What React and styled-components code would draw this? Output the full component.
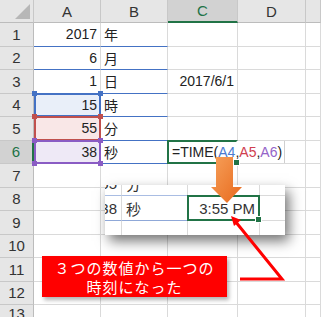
import React from 'react'
import styled, { createGlobalStyle } from 'styled-components';

const GlobalStyle = createGlobalStyle`
  html, body { margin: 0; padding: 0; background: #ffffff; }
  body { font-family: "Liberation Sans", "Noto Sans CJK JP", sans-serif; }
`

const Sheet = styled.div`
  position: relative;
  width: 321px;
  height: 317px;
  overflow: hidden;
  background: #ffffff;
`

const Grid = styled.div`
  display: grid;
  grid-template-columns: 34px 67px 67px 70px 68px 1fr;
  grid-template-rows: 23px repeat(12, 23.5px) 1fr;
  height: 100%;
`

const Corner = styled.div`
  position: relative;
  background: #e6e6e6;
  border-right: 1px solid #c8c8c8;
  border-bottom: 1px solid #bcbcbc;
  &::after{
    content: "";
    position: absolute;
    right: 3px;
    bottom: 3px;
    border-style: solid;
    border-width: 0 0 15px 15px;
    border-color: transparent transparent #b7b7b7 transparent;
  }
`

const ColHead = styled.div`
  display: flex;
  align-items: center;
  justify-content: center;
  font-size: 15px;
  color: ${({ $active }) => $active ? '#217346' : '#333333'};
  background: ${({ $active }) => $active ? '#d2d2d2' : '#e6e6e6'};
  border-right: 1px solid #c8c8c8;
  border-bottom: ${({ $active }) => $active ? '2px solid #217346' : '1px solid #bcbcbc'};
  box-sizing: border-box;
`

const RowHead = styled.div`
  display: flex;
  align-items: center;
  justify-content: center;
  font-size: 15px;
  color: ${({ $active }) => $active ? '#217346' : '#333333'};
  background: ${({ $active }) => $active ? '#d2d2d2' : '#e6e6e6'};
  border-right: ${({ $active }) => $active ? '2px solid #217346' : '1px solid #bcbcbc'};
  border-bottom: 1px solid #c8c8c8;
  box-sizing: border-box;
`

const Cell = styled.div`
  position: relative;
  display: flex;
  align-items: center;
  justify-content: ${({ $align }) => $align === 'right' ? 'flex-end' : 'flex-start'};
  padding: 0 3px;
  font-size: 14px;
  color: #222222;
  white-space: nowrap;
  background: ${({ $fill }) => $fill || '#ffffff'};
  border-right: 1px solid #dadada;
  border-bottom: 1px solid ${({ $under }) => $under || '#dadada'};
  box-sizing: border-box;
`

const RangeFrame = styled.div`
  position: absolute;
  left: 0;
  top: -1px;
  right: -1px;
  bottom: -1px;
  border: 2px solid ${({ $color }) => $color};
  z-index: 2;
  pointer-events: none;
`

const Handle = styled.span`
  position: absolute;
  width: 5px;
  height: 5px;
  background: ${({ $color }) => $color};
  ${({ $v }) => $v === 'top' ? 'top: -4px;' : 'bottom: -4px;'}
  ${({ $h }) => $h === 'left' ? 'left: -4px;' : 'right: -4px;'}
`

const Editor = styled.div`
  position: absolute;
  left: 0;
  top: 0;
  width: 117px;
  height: 100%;
  display: flex;
  align-items: center;
  padding-left: 4px;
  box-sizing: border-box;
  background: #ffffff;
  border-right: 1px solid #cfcfcf;
  font-size: 14px;
  color: #222222;
  z-index: 3;
`

const Ref = styled.span`
  color: ${({ $color }) => $color};
`

const ActiveFrame = styled.div`
  position: absolute;
  left: -1px;
  top: -1px;
  right: -1px;
  bottom: -1px;
  border: 2px solid #217346;
  border-right-color: ${({ $open }) => $open ? 'transparent' : '#217346'};
  z-index: 4;
  pointer-events: none;
`

const FillHandle = styled.span`
  position: absolute;
  right: -4px;
  bottom: -4px;
  width: 5px;
  height: 5px;
  background: #217346;
  border: 1px solid #ffffff;
`

/* zoomed-in callout */
const Callout = styled.div`
  position: absolute;
  left: 105px;
  top: 185px;
  width: 180px;
  height: 50px;
  overflow: hidden;
  background: #ffffff;
  box-shadow: 4px 6px 12px rgba(0, 0, 0, 0.55);
  z-index: 6;
`

const CalloutGrid = styled.div`
  display: grid;
  grid-template-columns: 67px 66px 72px 68px;
  grid-template-rows: repeat(3, 25px);
  margin-left: -50px;
  margin-top: -14px;
`

const ZoomCell = styled(Cell)`
  font-size: 15px;
  color: #333333;
  padding: 0 4px;
`

const OrangeArrow = styled.svg`
  position: absolute;
  left: 208px;
  top: 155px;
  z-index: 7;
`

const RedPointer = styled.svg`
  position: absolute;
  left: 222px;
  top: 208px;
  z-index: 7;
`

const Note = styled.div`
  position: absolute;
  left: 42px;
  top: 256px;
  width: 185px;
  height: 41px;
  display: flex;
  flex-direction: column;
  align-items: center;
  justify-content: center;
  background: #ff0000;
  color: #ffffff;
  font-family: "Noto Sans CJK JP", sans-serif;
  font-size: 15px;
  line-height: 19px;
  letter-spacing: 1px;
  box-shadow: 2px 3px 4px rgba(0, 0, 0, 0.3);
  z-index: 7;
`

const BLUE = '#4472c4';
const RED = '#c0504d';
const PURPLE = '#8a5cc4';

const rows = [
  { a: '2017', b: '年', c: '', under: BLUE },
  { a: '6', b: '月', c: '', under: BLUE },
  { a: '1', b: '日', c: '2017/6/1', under: BLUE },
  { a: '15', b: '時', range: BLUE, fill: '#e9eff9', under: BLUE },
  { a: '55', b: '分', range: RED, fill: '#f9e7e7', under: BLUE },
  { a: '38', b: '秒', range: PURPLE, fill: '#eee9f6', under: BLUE, formula: true },
  {}, {}, {}, {}, {}, {}
];

const Range = ({ color }) => (
  <RangeFrame $color={color}>
    <Handle $color={color} $v="top" $h="left" />
    <Handle $color={color} $v="top" $h="right" />
    <Handle $color={color} $v="bottom" $h="left" />
    <Handle $color={color} $v="bottom" $h="right" />
  </RangeFrame>
)

const App = () => {
  return (
    <Sheet>
      <GlobalStyle />
      <Grid>
        <Corner />
        <ColHead>A</ColHead>
        <ColHead>B</ColHead>
        <ColHead $active>C</ColHead>
        <ColHead>D</ColHead>
        <ColHead />
        {rows.map((r, i) => (
          <React.Fragment key={i}>
            <RowHead $active={r.formula}>{i + 1}</RowHead>
            <Cell $align="right" $fill={r.fill} $under={r.under}>
              {r.a}
              {r.range && <Range color={r.range} />}
            </Cell>
            <Cell $under={r.under}>{r.b}</Cell>
            <Cell $align="right">
              {r.c}
              {r.formula && (
                <>
                  <Editor>
                    =TIME(<Ref $color="#4a7bd0">A4</Ref>,<Ref $color="#d0404f">A5</Ref>,<Ref $color="#9464c8">A6</Ref>)
                  </Editor>
                  <ActiveFrame $open><FillHandle /></ActiveFrame>
                </>
              )}
            </Cell>
            <Cell />
            <Cell />
          </React.Fragment>
        ))}
        <RowHead>13</RowHead>
        <Cell /><Cell /><Cell /><Cell /><Cell />
      </Grid>

      <Callout>
        <CalloutGrid>
          <ZoomCell $align="right" $under="#a9bde3">55</ZoomCell>
          <ZoomCell $under="#a9bde3">分</ZoomCell>
          <ZoomCell />
          <ZoomCell />
          <ZoomCell $align="right" $under="#8fa8d8">38</ZoomCell>
          <ZoomCell $under="#8fa8d8">秒</ZoomCell>
          <ZoomCell $align="right">
            3:55 PM
            <ActiveFrame><FillHandle /></ActiveFrame>
          </ZoomCell>
          <ZoomCell />
          <ZoomCell /><ZoomCell /><ZoomCell /><ZoomCell />
        </CalloutGrid>
      </Callout>

      <OrangeArrow width="38" height="50" viewBox="0 0 38 50">
        <defs>
          <linearGradient id="orangeFill" x1="0" y1="0" x2="1" y2="1">
            <stop offset="0" stopColor="#f6a05a" />
            <stop offset="1" stopColor="#e8691c" />
          </linearGradient>
        </defs>
        <polygon points="8,2 25,2 25,32 34,32 19,48 3,32 8,32" fill="url(#orangeFill)" />
      </OrangeArrow>

      <RedPointer width="70" height="80" viewBox="0 0 70 80">
        <polyline points="18,71 60,71 13,13" fill="none" stroke="#ff0000" strokeWidth="3" strokeLinejoin="miter" />
        <polygon points="9,8 19,12 12,18" fill="#ff0000" />
      </RedPointer>

      <Note>
        <span>３つの数値から一つの</span>
        <span>時刻になった</span>
      </Note>
    </Sheet>
  );
};

export default App;
